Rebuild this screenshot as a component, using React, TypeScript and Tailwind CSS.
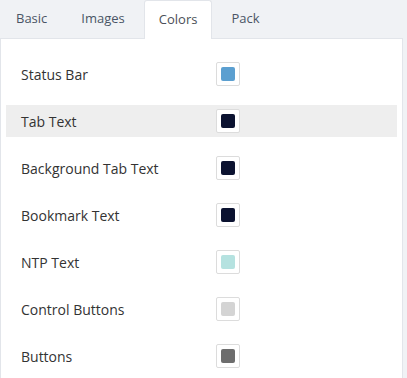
const tabs = ["Basic", "Images", "Colors", "Pack"];

const rows = [
  { label: "Status Bar", color: "#5b9fd0" },
  { label: "Tab Text", color: "#0b1230", active: true },
  { label: "Background Tab Text", color: "#0b1230" },
  { label: "Bookmark Text", color: "#0b1230" },
  { label: "NTP Text", color: "#b5e2e0" },
  { label: "Control Buttons", color: "#d4d4d4" },
  { label: "Buttons", color: "#6d6d6d" },
];

function Swatch({ color }: { color: string }) {
  return (
    <div className="flex h-6 w-6 items-center justify-center rounded-[2px] border border-[#dcdcdc] bg-white">
      <div className="h-[14px] w-[14px] rounded-[2px]" style={{ backgroundColor: color }} />
    </div>
  );
}

export default function App() {
  return (
    <div
      className="h-[378px] w-[407px] overflow-hidden bg-[#f0f2f5] text-[#333]"
      style={{ fontFamily: '"Open Sans", sans-serif' }}
    >
      <div className="flex gap-1 pl-px">
        {tabs.map((t) => (
          <div
            key={t}
            className={
              t === "Colors"
                ? "relative z-10 -mb-px flex h-[39px] items-center rounded-t-[3px] border border-b-0 border-[#e2e5ea] bg-white px-[14px] text-[13px] text-[#4a4f57]"
                : "flex h-[38px] items-center px-[15px] text-[13px] text-[#4a5565]"
            }
          >
            {t}
          </div>
        ))}
      </div>
      <div className="w-[403px] border border-[#e2e5ea] bg-white px-[5px] pt-[19px] pb-[6px]">
        <div className="flex flex-col gap-[15px]">
          {rows.map((r) => (
            <div
              key={r.label}
              className={
                "flex h-8 items-center pl-[15px] text-[14px] " + (r.active ? "bg-[#eeeeee]" : "")
              }
            >
              <span className="w-[195px]">{r.label}</span>
              <Swatch color={r.color} />
            </div>
          ))}
        </div>
      </div>
    </div>
  );
}
